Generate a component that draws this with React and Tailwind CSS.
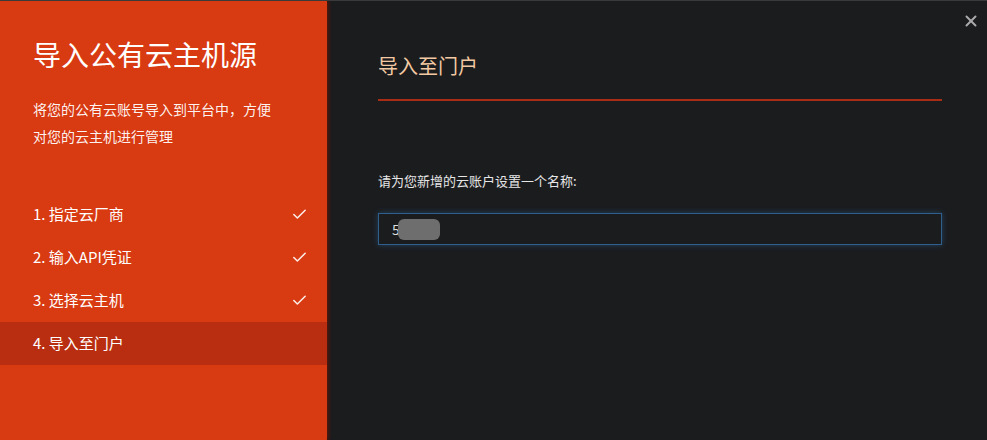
import { Check, X } from "lucide-react";

const steps = [
  { label: "1. 指定云厂商", done: true },
  { label: "2. 输入API凭证", done: true },
  { label: "3. 选择云主机", done: true },
  { label: "4. 导入至门户", active: true },
];

const font = { fontFamily: '"Noto Sans CJK SC", "Noto Sans", sans-serif' };

export default function App() {
  return (
    <div className="flex h-[440px] w-[987px] overflow-hidden border-t border-[#3a3a3a] bg-[#1b1c1e]" style={font}>
      <aside className="flex w-[327px] shrink-0 flex-col bg-[#d83a12] pt-[33px] shadow-[2px_0_3px_rgba(120,20,0,0.6)]">
        <h1 className="px-[33px] text-[28px] leading-[40px] text-white">导入公有云主机源</h1>
        <p className="mt-[22px] px-[33px] text-[14px] leading-[27px] text-white/95">
          将您的公有云账号导入到平台中，方便
          <br />
          对您的云主机进行管理
        </p>
        <ul className="mt-[43px]">
          {steps.map((s) => (
            <li
              key={s.label}
              className={`flex h-[43px] items-center justify-between pl-[33px] pr-[19px] text-[15px] text-white ${
                s.active ? "bg-[#b92e10]" : ""
              }`}
            >
              <span>{s.label}</span>
              {s.done && <Check size={17} strokeWidth={2.2} className="text-white/90" />}
            </li>
          ))}
        </ul>
      </aside>
      <main className="relative flex-1 pl-[51px] pr-[45px] pt-[50px]">
        <button className="absolute right-[7px] top-[11px] text-[#aaaaaa]">
          <X size={18} strokeWidth={2.6} />
        </button>
        <h2 className="text-[20px] leading-[30px] text-[#f2c9a2]">导入至门户</h2>
        <div className="mt-[18px] h-[2px] bg-[#a82c16]" />
        <label className="mt-[70px] block text-[13px] leading-[20px] text-[#e6e6e6]">
          请为您新增的云账户设置一个名称:
        </label>
        <div className="mt-[22px] flex h-[32px] items-center border border-[#2f5f8c] bg-[#1b1c1e] px-[13px] text-[14px] text-[#dddddd] shadow-[0_0_6px_rgba(47,110,170,0.45)]">
          <span>5</span>
          <span className="-ml-[2px] h-[21px] w-[42px] rounded-md bg-[#6e6e6e]" />
        </div>
      </main>
    </div>
  );
}
